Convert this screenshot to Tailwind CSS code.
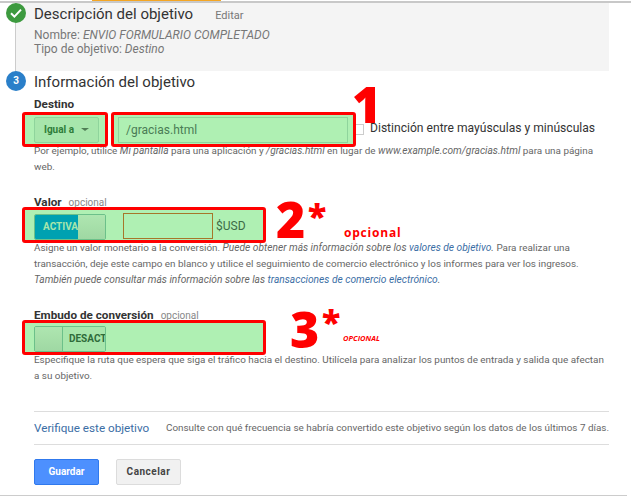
<!DOCTYPE html>
<html lang="es">
<head>
  <meta charset="UTF-8" />
  <title>Información del objetivo</title>
  <script src="https://cdn.jsdelivr.net/npm/@tailwindcss/browser@4"></script>
</head>
<body class="bg-white">
<div class="relative w-[631px] h-[498px] overflow-hidden bg-white font-['Roboto',sans-serif] text-[9.9px] leading-[16px] text-[#666]">
  <!-- barra superior -->
  <div class="h-[3px] border-b-2 border-[#c8c8c8]">
    <div class="ml-[92px] w-[129px] h-[1px] bg-[#f5a623]"></div>
  </div>

  <!-- linea del timeline -->
  <div class="absolute left-[15px] top-[3px] w-px h-[72px] bg-[#ccc]"></div>

  <!-- paso completado -->
  <div class="ml-[16px] w-[593px] h-[68px] bg-[#f4f4f4] pl-[18px]">
    <div class="flex items-baseline gap-[22px] h-[22px]">
      <span class="text-[15px] leading-[22px] text-[#333]">Descripción del objetivo</span>
      <span class="text-[11px] text-[#777]">Editar</span>
    </div>
    <div class="mt-[3px] text-[12px] leading-[14px] text-[#777]">Nombre: <i>ENVIO FORMULARIO COMPLETADO</i></div>
    <div class="text-[12px] leading-[15px] text-[#777]">Tipo de objetivo: <i>Destino</i></div>
  </div>

  <div class="absolute left-[6px] top-[3px] w-[20px] h-[20px] rounded-full bg-[#3d9a3f] flex items-center justify-center">
    <svg width="12" height="10" viewBox="0 0 12 10"><path d="M1 5.2 4.4 8.6 11 1.6" fill="none" stroke="#fff" stroke-width="2"/></svg>
  </div>
  <div class="absolute left-[6px] top-[71px] w-[20px] h-[20px] rounded-full bg-[#2a7fc9] text-white text-[10px] font-bold flex items-center justify-center">3</div>

  <!-- informacion del objetivo -->
  <div class="pl-[34px] w-[609px]">
    <div class="text-[15px] leading-[22px] text-[#333]">Información del objetivo</div>

    <div class="mt-[4px] text-[11.7px] leading-[14px] font-bold text-[#333]">Destino</div>
    <div class="relative mt-[1px] -ml-[12px] flex items-center h-[35px]">
      <div class="relative z-10 w-[86px] h-[35px] pl-[9px] flex items-center border-[3px] border-[#f00] rounded-[3px] bg-[#aff0b3]">
        <div class="w-[65px] h-[26px] rounded-[2px] border border-[#8fd49c] bg-[#a7e6ac] text-[#2f7d3a] text-[10px] font-bold flex items-center justify-center gap-[7px]">
          Igual a
          <span class="w-0 h-0 border-x-[4px] border-x-transparent border-t-[3px] border-t-[#4f7d55]"></span>
        </div>
      </div>
      <div class="relative z-10 ml-[3px] w-[245px] h-[35px] pl-[4px] flex items-center border-[3px] border-[#f00] rounded-[3px] bg-[#aff0b3]">
        <div class="w-[230px] h-[26px] border border-[#8fd49c] pl-[7px] text-[12px] leading-[24px] text-[#4a7c55]">/gracias.html</div>
      </div>
      <div class="-ml-[3px] w-[11px] h-[11px] border border-[#ccc] bg-white"></div>
      <div class="ml-[6px] -mt-[3px] text-[12.1px] text-[#333] whitespace-nowrap">Distinción entre mayúsculas y minúsculas</div>
    </div>
    <div class="-mt-[4px] w-[575px]">Por ejemplo, utilice <i class="text-[10.2px]">Mi pantalla</i> para una aplicación y <i class="text-[10.2px]">/gracias.html</i> en lugar de <i class="text-[10.2px]">www.example.com/gracias.html</i> para una página web.</div>

    <div class="mt-[19px] flex items-baseline gap-[7px] h-[15px]">
      <span class="text-[11.7px] font-bold text-[#333]">Valor</span><span class="text-[10px] text-[#888]">opcional</span>
    </div>
    <div class="relative z-10 -mt-[2px] -ml-[12px] w-[244px] h-[36px] pl-[9px] pt-[4px] flex items-start border-[3px] border-[#f00] rounded-[3px] bg-[#aff0b3]">
      <div class="flex w-[72px] h-[26px] rounded-[2px] overflow-hidden border border-[#6cc08a]">
        <div class="w-[43px] pl-[8px] bg-[#00a1b1] text-[#a7e6ac] text-[10px] leading-[24px] font-bold whitespace-nowrap overflow-hidden">ACTIVA</div>
        <div class="flex-1 bg-gradient-to-b from-[#aee6b0] to-[#9fd8a3]"></div>
      </div>
      <div class="ml-[17px] -mt-[1px] w-[90px] h-[26px] border border-[#a6762a]"></div>
      <div class="ml-[3px] text-[12px] leading-[24px] text-[#3d6b45]">$USD</div>
    </div>
    <div class="-mt-[3px] w-[575px]">Asigne un valor monetario a la conversión. <i class="text-[10.2px]">Puede obtener más información sobre los <span class="text-[#3b6ea5]">valores de objetivo</span>.</i> Para realizar una transacción, deje este campo en blanco y utilice el seguimiento de comercio electrónico y los informes para ver los ingresos. <i class="text-[10.2px]">También puede consultar más información sobre las <span class="text-[#3b6ea5]">transacciones de comercio electrónico</span>.</i></div>

    <div class="mt-[19px] flex items-baseline gap-[7px] h-[15px]">
      <span class="text-[11.7px] font-bold text-[#333]">Embudo de conversión</span><span class="text-[10px] text-[#888]">opcional</span>
    </div>
    <div class="relative z-10 -mt-[2px] -ml-[12px] w-[244px] h-[35px] pl-[9px] pt-[3px] flex items-start border-[3px] border-[#f00] rounded-[3px] bg-[#aff0b3]">
      <div class="flex w-[72px] h-[26px] rounded-[2px] overflow-hidden border border-[#6cc08a]">
        <div class="w-[28px] bg-gradient-to-b from-[#aee6b0] to-[#9fd8a3] border-r border-[#6cc08a]"></div>
        <div class="flex-1 bg-[#a7e6ac] text-[#2f6b3a] text-[10px] font-bold pl-[6px] leading-[24px] whitespace-nowrap overflow-hidden">DESACT</div>
      </div>
    </div>
    <div class="-mt-[3px] w-[575px]">Especifique la ruta que espera que siga el tráfico hacia el destino. Utilícela para analizar los puntos de entrada y salida que afectan a su objetivo.</div>

    <div class="mt-[27px] w-[575px] h-[34px] border-y border-[#ddd] flex items-center">
      <span class="w-[132px] shrink-0 text-[11.7px] text-[#3b6ea5] whitespace-nowrap">Verifique este objetivo</span>
      <span class="whitespace-nowrap">Consulte con qué frecuencia se habría convertido este objetivo según los datos de los últimos 7 días.</span>
    </div>

    <div class="mt-[14px] flex gap-[17px]">
      <button class="w-[65px] h-[26px] rounded-[2px] bg-[#4d90fe] border border-[#3079ed] text-white text-[10px] font-bold">Guardar</button>
      <button class="w-[65px] h-[26px] rounded-[2px] bg-[#f1f1f1] border border-[#dcdcdc] text-[#444] text-[10px] font-bold tracking-[0.5px]">Cancelar</button>
    </div>
  </div>

  <div class="absolute left-0 top-[495px] w-[627px] h-px bg-[#ccc]"></div>

  <!-- anotaciones en rojo -->
  <div class="absolute z-20 left-[352px] top-[74px] font-['Open_Sans',sans-serif] font-extrabold text-[50px] leading-[60px] text-[#f00]">1</div>
  <div class="absolute z-20 left-[276px] top-[189px] font-['Open_Sans',sans-serif] font-extrabold text-[50px] leading-[60px] text-[#f00]">2</div>
  <div class="absolute z-20 left-[308px] top-[196px] font-['Open_Sans',sans-serif] font-extrabold text-[34px] leading-[40px] text-[#f00]">*</div>
  <div class="absolute z-20 left-[344px] top-[226px] font-['Open_Sans',sans-serif] font-bold text-[12px] tracking-[0.8px] leading-[14px] text-[#f00]">opcional</div>
  <div class="absolute z-20 left-[290px] top-[299px] font-['Open_Sans',sans-serif] font-extrabold text-[50px] leading-[60px] text-[#f00]">3</div>
  <div class="absolute z-20 left-[322px] top-[302px] font-['Open_Sans',sans-serif] font-extrabold text-[34px] leading-[40px] text-[#f00]">*</div>
  <div class="absolute z-20 left-[343px] top-[334px] font-['Open_Sans',sans-serif] font-bold italic text-[7.5px] leading-[8px] text-[#f00]">OPCIONAL</div>
</div>
</body>
</html>
